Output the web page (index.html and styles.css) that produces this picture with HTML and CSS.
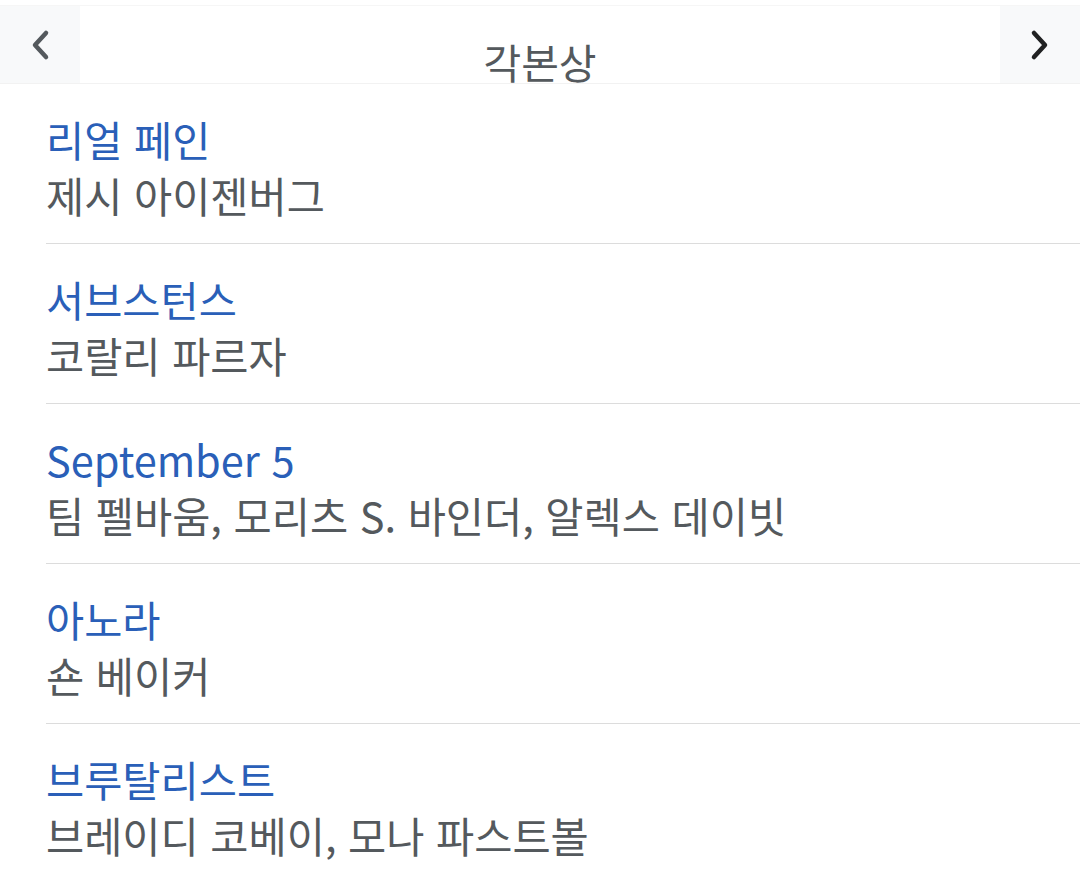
FILE: index.html
```html
<!DOCTYPE html>
<html lang="ko">
<head>
  <meta charset="UTF-8">
  <meta name="viewport" content="width=device-width, initial-scale=1.0">
  <title>각본상</title>
  <link rel="stylesheet" href="styles.css">
</head>
<body>

  <div class="header">
    <button class="nav-btn" aria-label="이전">
      <svg width="26" height="34" viewBox="0 0 26 34">
        <path d="M19 5 L8 17 L19 29" fill="none" stroke="#54595d" stroke-width="4.5" stroke-linecap="round" stroke-linejoin="round"/>
      </svg>
    </button>
    <h1 class="title">각본상</h1>
    <button class="nav-btn" aria-label="다음">
      <svg width="26" height="34" viewBox="0 0 26 34">
        <path d="M7 5 L18 17 L7 29" fill="none" stroke="#202122" stroke-width="4.5" stroke-linecap="round" stroke-linejoin="round"/>
      </svg>
    </button>
  </div>

  <ul class="list">
    <li class="item">
      <a href="#" class="item-title">리얼 페인</a>
      <div class="item-sub">제시 아이젠버그</div>
    </li>
    <li class="item">
      <a href="#" class="item-title">서브스턴스</a>
      <div class="item-sub">코랄리 파르자</div>
    </li>
    <li class="item">
      <a href="#" class="item-title">September 5</a>
      <div class="item-sub">팀 펠바움, 모리츠 S. 바인더, 알렉스 데이빗</div>
    </li>
    <li class="item">
      <a href="#" class="item-title">아노라</a>
      <div class="item-sub">숀 베이커</div>
    </li>
    <li class="item">
      <a href="#" class="item-title">브루탈리스트</a>
      <div class="item-sub">브레이디 코베이, 모나 파스트볼</div>
    </li>
  </ul>

</body>
</html>
```

FILE: styles.css
```css
body {
  margin: 0;
  padding: 0;
  font-family: "Noto Sans CJK KR", "Noto Sans", sans-serif;
  background-color: #fff;
  color: #54595d;
}

.header {
  display: flex;
  align-items: stretch;
  height: 77px;
  margin-top: 5px;
  border-top: 1px solid #f6f6f6;
  border-bottom: 1px solid #f2f2f2;
}

.nav-btn {
  width: 80px;
  flex: 0 0 80px;
  border: none;
  padding: 0;
  background-color: #f8f9fa;
  display: flex;
  justify-content: center;
  align-items: center;
  cursor: pointer;
}

.title {
  flex: 1;
  margin: 0;
  text-align: center;
  font-size: 41px;
  font-weight: normal;
  line-height: 40px;
  padding-top: 35px;
  box-sizing: border-box;
  color: #54595d;
}

.list {
  list-style: none;
  margin: 0;
  padding: 0 0 0 46px;
}

.item {
  padding: 27px 0 20px;
  border-bottom: 1px solid #dcdcdc;
  font-size: 41.5px;
  line-height: 56px;
}

.item-title {
  display: block;
  color: #2a5fb8;
  text-decoration: none;
}

.item-sub {
  color: #54595d;
}
```
